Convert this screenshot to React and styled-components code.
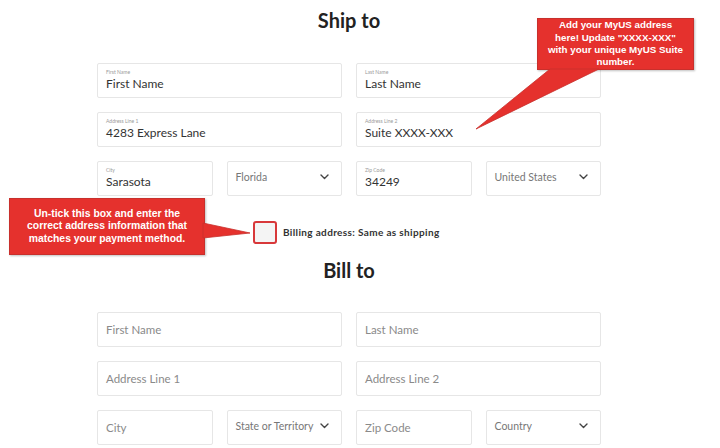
import React from "react";
import styled, { createGlobalStyle } from "styled-components";

const Global = createGlobalStyle`
  html, body {
    margin: 0;
    padding: 0;
    background: #ffffff;
  }
  body {
    font-family: Lato, "Open Sans", sans-serif;
    color: #333333;
  }
`;

const Page = styled.div`
  position: relative;
  width: 720px;
  height: 448px;
  overflow: hidden;
  background: #ffffff;
`;

const Form = styled.div`
  width: 504px;
  margin-left: 97px;
  display: flex;
  flex-direction: column;
`;

const Title = styled.h2`
  margin: 0;
  height: ${(p) => p.$h}px;
  padding-top: ${(p) => p.$top}px;
  box-sizing: border-box;
  text-align: center;
  font-size: 20px;
  font-weight: 700;
  line-height: 24px;
  color: #222222;
`;

const Rows = styled.div`
  display: flex;
  flex-direction: column;
  gap: 14px;
`;

const Row = styled.div`
  display: grid;
  grid-template-columns: 1fr 1fr;
  gap: 14px;
`;

const Half = styled.div`
  display: grid;
  grid-template-columns: 1fr 1fr;
  gap: 14px;
`;

const Box = styled.div`
  height: 35px;
  box-sizing: border-box;
  border: 1px solid #e6e6e6;
  border-radius: 2px;
  background: #ffffff;
  padding: 0 8px;
  display: flex;
  flex-direction: column;
  justify-content: ${(p) => (p.$label ? "flex-start" : "center")};
  padding-top: ${(p) => (p.$label ? "5px" : "0")};
`;

const Label = styled.div`
  font-size: 5px;
  line-height: 6px;
  color: #9a9a9a;
`;

const Value = styled.div`
  font-size: 12px;
  line-height: 16px;
  margin-top: 1px;
  color: #333333;
`;

const Placeholder = styled.div`
  font-size: 11.5px;
  color: #8a8a8a;
`;

const Select = styled.div`
  height: 35px;
  box-sizing: border-box;
  border: 1px solid #e6e6e6;
  border-radius: 2px;
  display: flex;
  align-items: center;
  justify-content: space-between;
  padding: 0 12px 3px 8px;
  font-size: 10.5px;
  color: #777777;
  white-space: nowrap;
`;

const CheckRow = styled.div`
  display: flex;
  align-items: center;
  gap: 6px;
  margin: 24px 0 0 156px;
  height: 24px;
`;

const Check = styled.div`
  width: 24px;
  height: 23px;
  box-sizing: border-box;
  border: 2.5px solid #d8383a;
  border-radius: 3px;
  background: #f4f4f4;
`;

const CheckText = styled.span`
  font-size: 10px;
  font-weight: 700;
  letter-spacing: 0.35px;
  color: #333333;
`;

const Callout = styled.div`
  position: absolute;
  left: ${(p) => p.$x}px;
  top: ${(p) => p.$y}px;
  width: ${(p) => p.$w}px;
  height: ${(p) => p.$h}px;
  box-sizing: border-box;
  background: #e5312d;
  border: 1px solid #c8302c;
  display: flex;
  align-items: center;
  justify-content: center;
  text-align: center;
  font-family: "Liberation Sans", Arial, sans-serif;
  font-weight: 700;
  font-size: ${(p) => p.$fs}px;
  line-height: 12.4px;
  color: #ffffff;
  white-space: nowrap;
  box-shadow: 1px 1px 2px rgba(0, 0, 0, 0.25);
`;

const Pointer = styled.svg`
  position: absolute;
  left: 0;
  top: 0;
  overflow: visible;
  pointer-events: none;
`;

const CalloutText = styled.div`
  position: relative;
`;

function Chevron() {
  return (
    <svg width="9" height="6" viewBox="0 0 9 6">
      <path d="M1 1l3.5 3.5L8 1" fill="none" stroke="#444" strokeWidth="1.4" strokeLinecap="round" strokeLinejoin="round" />
    </svg>
  );
}

function Field({ label, value, placeholder }) {
  if (label) {
    return (
      <Box $label>
        <Label>{label}</Label>
        <Value>{value}</Value>
      </Box>
    );
  }
  return (
    <Box>
      <Placeholder>{placeholder}</Placeholder>
    </Box>
  );
}

function Dropdown({ text }) {
  return (
    <Select>
      <span>{text}</span>
      <Chevron />
    </Select>
  );
}

export default function App() {
  return (
    <Page>
      <Global />
      <Form>
        <Title $h={63} $top={8}>Ship to</Title>
        <Rows>
          <Row>
            <Field label="First Name" value="First Name" />
            <Field label="Last Name" value="Last Name" />
          </Row>
          <Row>
            <Field label="Address Line 1" value="4283 Express Lane" />
            <Field label="Address Line 2" value="Suite XXXX-XXX" />
          </Row>
          <Row>
            <Half>
              <Field label="City" value="Sarasota" />
              <Dropdown text="Florida" />
            </Half>
            <Half>
              <Field label="Zip Code" value="34249" />
              <Dropdown text="United States" />
            </Half>
          </Row>
        </Rows>
        <CheckRow>
          <Check />
          <CheckText>Billing address: Same as shipping</CheckText>
        </CheckRow>
        <Title $h={68} $top={14}>Bill to</Title>
        <Rows>
          <Row>
            <Field placeholder="First Name" />
            <Field placeholder="Last Name" />
          </Row>
          <Row>
            <Field placeholder="Address Line 1" />
            <Field placeholder="Address Line 2" />
          </Row>
          <Row>
            <Half>
              <Field placeholder="City" />
              <Dropdown text="State or Territory" />
            </Half>
            <Half>
              <Field placeholder="Zip Code" />
              <Dropdown text="Country" />
            </Half>
          </Row>
        </Rows>
      </Form>

      <Callout $x={537} $y={18} $w={157} $h={52} $fs={9.8}>
        <Pointer width="1" height="1">
          <polygon points="12,50 61,50 -62,110" fill="#e5312d" stroke="#c8302c" strokeWidth="0.8" />
        </Pointer>
        <CalloutText>
          Add your MyUS address
          <br />
          here! Update "XXXX-XXX"
          <br />
          with your unique MyUS Suite
          <br />
          number.
        </CalloutText>
      </Callout>

      <Callout $x={9} $y={198} $w={196} $h={57} $fs={10.4}>
        <Pointer width="1" height="1">
          <polygon points="193,24 193,39 240,34" fill="#e5312d" stroke="#c8302c" strokeWidth="0.8" />
        </Pointer>
        <CalloutText>
          Un-tick this box and enter the
          <br />
          correct address information that
          <br />
          matches your payment method.
        </CalloutText>
      </Callout>
    </Page>
  );
}
